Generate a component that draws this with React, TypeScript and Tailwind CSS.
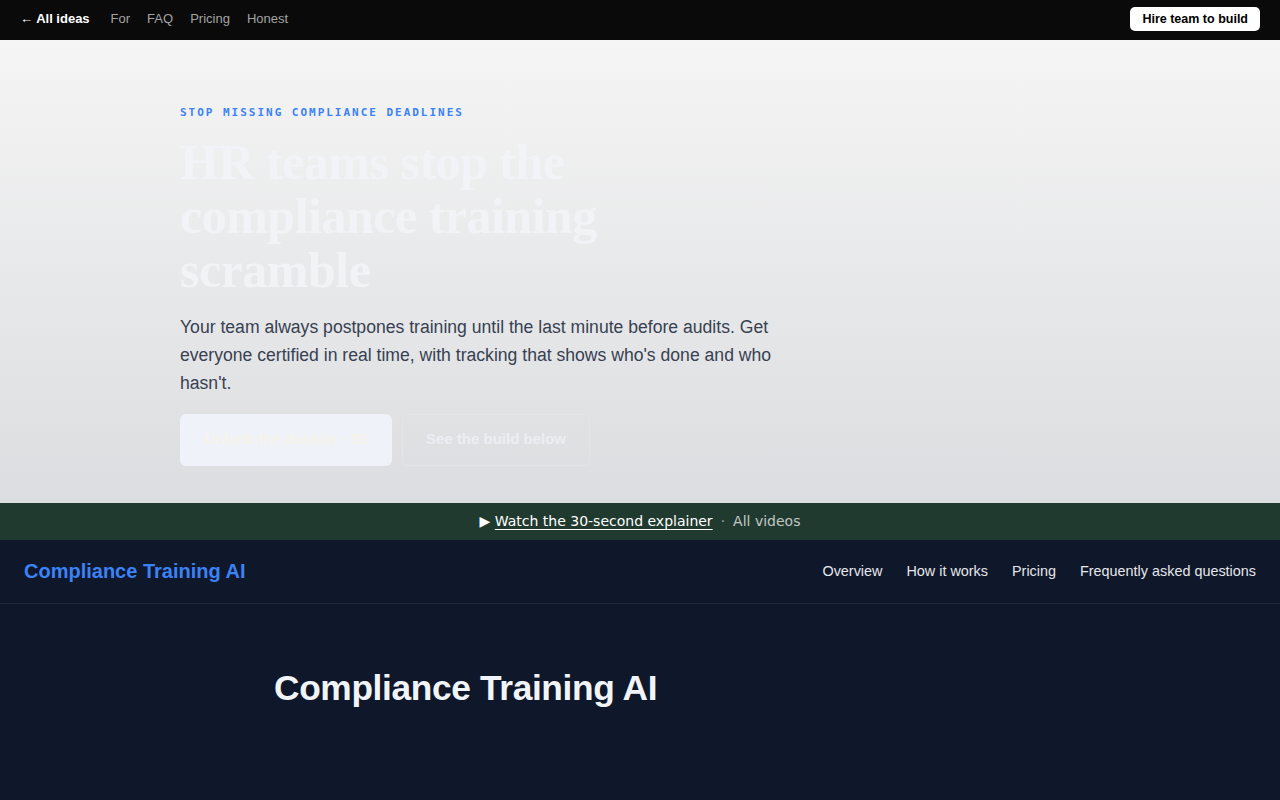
export default function App() {
  return (
    <div className="min-h-[800px] bg-[#0f172a] font-['Liberation_Sans',Arial,sans-serif]">
      <header className="flex h-10 items-center justify-between bg-[#0a0a0a] px-5 pb-[2px]">
        <nav className="flex items-center gap-[17px] text-[13px]">
          <a className="mr-1 font-bold text-white">← All ideas</a>
          <a className="text-[#a3a3a3]">For</a>
          <a className="text-[#a3a3a3]">FAQ</a>
          <a className="text-[#a3a3a3]">Pricing</a>
          <a className="text-[#a3a3a3]">Honest</a>
        </nav>
        <button className="h-6 rounded-[5px] bg-white px-3 text-[12.5px] font-bold text-black">Hire team to build</button>
      </header>

      <section className="bg-gradient-to-b from-[#f5f5f5] to-[#dcdde0] px-[180px] pt-[65px] pb-[37px]">
        <p className="font-['DejaVu_Sans_Mono',monospace] text-[11px] font-bold tracking-[0.18em] text-[#3b82f6]">
          STOP MISSING COMPLIANCE DEADLINES
        </p>
        <h1 className="mt-[13px] max-w-[470px] font-['Liberation_Serif','Times_New_Roman',serif] text-[50px] font-bold leading-[54px] tracking-[-0.01em] text-[#f1f3f7]">
          HR teams stop the compliance training scramble
        </h1>
        <p className="mt-[16px] max-w-[600px] text-[17.6px] leading-[28px] text-[#374151]">
          Your team always postpones training until the last minute before audits. Get everyone certified in real time, with tracking that shows who's done and who hasn't.
        </p>
        <div className="mt-[17px] flex gap-[10px]">
          <button className="h-[52px] w-[212px] rounded-[6px] bg-[#eff2f8] text-[15px] font-bold text-[#f7f3ea]">
            Unlock the dossier · $5
          </button>
          <button className="h-[52px] w-[188px] rounded-[6px] border border-[#e3e5e9] text-[15px] font-bold text-[#eceef3]">
            See the build below
          </button>
        </div>
      </section>

      <div className="flex h-[37px] items-center justify-center gap-[8px] bg-[#203a30] font-['DejaVu_Sans',sans-serif] text-[14px]">
        <span className="text-white">
          ▶ <a className="underline underline-offset-[3px]">Watch the 30-second explainer</a>
        </span>
        <span className="text-[#9ca3af]">·</span>
        <a className="text-[#c2c7c4]">All videos</a>
      </div>

      <nav className="flex h-16 items-center justify-between border-b border-[#1f2937] px-6">
        <span className="text-[20px] font-bold text-[#3b82f6]">Compliance Training AI</span>
        <div className="flex items-center gap-6 pt-[2px] text-[14.4px] text-[#e5e7eb]">
          <a>Overview</a>
          <a>How it works</a>
          <a>Pricing</a>
          <a>Frequently asked questions</a>
        </div>
      </nav>

      <main className="pl-[274px] pt-[62px]">
        <h2 className="text-[35.3px] font-bold leading-[44px] tracking-[-0.01em] text-[#f1f5f9]">Compliance Training AI</h2>
      </main>
    </div>
  )
}
